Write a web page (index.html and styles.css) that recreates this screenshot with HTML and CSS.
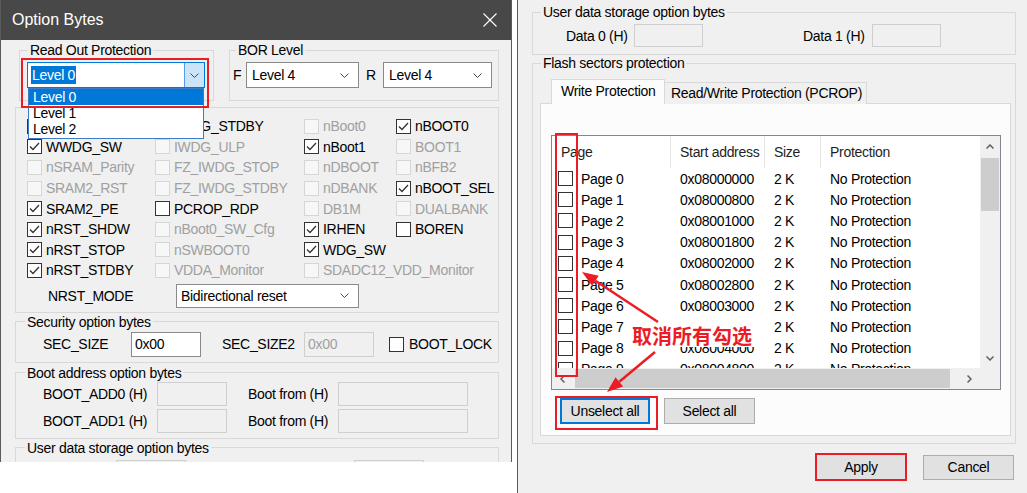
FILE: index.html
```html
<!DOCTYPE html>
<html>
<head>
<meta charset="utf-8">
<title>Option Bytes</title>
<link rel="stylesheet" href="styles.css">
</head>
<body>
<div class="dlg">
  <div class="titlebar">
    <span class="title">Option Bytes</span>
    <svg class="close" viewBox="0 0 14 14"><line x1="0.5" y1="0.5" x2="13.5" y2="13.5"/><line x1="13.5" y1="0.5" x2="0.5" y2="13.5"/></svg>
  </div>
  <div class="lbody">
    <div class="rowA">
      <fieldset class="grp rop">
        <legend>Read Out Protection</legend>
        <div class="combo focus">
          <span class="selv">Level 0</span>
          <span class="dbtn"><svg class="chev" viewBox="0 0 9 5"><polyline points="0.5,0.5 4.5,4.5 8.5,0.5"/></svg></span>
        </div>
      </fieldset>
      <fieldset class="grp bor">
        <legend>BOR Level</legend>
        <div class="borrow">
          <span class="fl">F</span>
          <div class="combo wF"><span>Level 4</span><svg class="chev" viewBox="0 0 9 5"><polyline points="0.5,0.5 4.5,4.5 8.5,0.5"/></svg></div>
          <span class="rl">R</span>
          <div class="combo wR"><span>Level 4</span><svg class="chev" viewBox="0 0 9 5"><polyline points="0.5,0.5 4.5,4.5 8.5,0.5"/></svg></div>
        </div>
      </fieldset>
    </div>

    <div class="grp cbgrp">
      <div class="cbgrid">
        <div class="cell"><span class="cb"><svg viewBox="0 0 13 13"><polyline points="2,6.5 5,9.5 11,3"/></svg></span><span>IWDG_SW</span></div>
        <div class="cell"><span class="cb"></span><span>IWDG_STDBY</span></div>
        <div class="cell dis"><span class="cb"></span><span>nBoot0</span></div>
        <div class="cell"><span class="cb"><svg viewBox="0 0 13 13"><polyline points="2,6.5 5,9.5 11,3"/></svg></span><span>nBOOT0</span></div>

        <div class="cell"><span class="cb"><svg viewBox="0 0 13 13"><polyline points="2,6.5 5,9.5 11,3"/></svg></span><span>WWDG_SW</span></div>
        <div class="cell dis"><span class="cb"></span><span>IWDG_ULP</span></div>
        <div class="cell"><span class="cb"><svg viewBox="0 0 13 13"><polyline points="2,6.5 5,9.5 11,3"/></svg></span><span>nBoot1</span></div>
        <div class="cell dis"><span class="cb"></span><span>BOOT1</span></div>

        <div class="cell dis"><span class="cb"></span><span>nSRAM_Parity</span></div>
        <div class="cell dis"><span class="cb"></span><span>FZ_IWDG_STOP</span></div>
        <div class="cell dis"><span class="cb"></span><span>nDBOOT</span></div>
        <div class="cell dis"><span class="cb"></span><span>nBFB2</span></div>

        <div class="cell dis"><span class="cb"></span><span>SRAM2_RST</span></div>
        <div class="cell dis"><span class="cb"></span><span>FZ_IWDG_STDBY</span></div>
        <div class="cell dis"><span class="cb"></span><span>nDBANK</span></div>
        <div class="cell"><span class="cb"><svg viewBox="0 0 13 13"><polyline points="2,6.5 5,9.5 11,3"/></svg></span><span>nBOOT_SEL</span></div>

        <div class="cell"><span class="cb"><svg viewBox="0 0 13 13"><polyline points="2,6.5 5,9.5 11,3"/></svg></span><span>SRAM2_PE</span></div>
        <div class="cell"><span class="cb"></span><span>PCROP_RDP</span></div>
        <div class="cell dis"><span class="cb"></span><span>DB1M</span></div>
        <div class="cell dis"><span class="cb"></span><span>DUALBANK</span></div>

        <div class="cell"><span class="cb"><svg viewBox="0 0 13 13"><polyline points="2,6.5 5,9.5 11,3"/></svg></span><span>nRST_SHDW</span></div>
        <div class="cell dis"><span class="cb"></span><span>nBoot0_SW_Cfg</span></div>
        <div class="cell"><span class="cb"><svg viewBox="0 0 13 13"><polyline points="2,6.5 5,9.5 11,3"/></svg></span><span>IRHEN</span></div>
        <div class="cell"><span class="cb"></span><span>BOREN</span></div>

        <div class="cell"><span class="cb"><svg viewBox="0 0 13 13"><polyline points="2,6.5 5,9.5 11,3"/></svg></span><span>nRST_STOP</span></div>
        <div class="cell dis"><span class="cb"></span><span>nSWBOOT0</span></div>
        <div class="cell"><span class="cb"><svg viewBox="0 0 13 13"><polyline points="2,6.5 5,9.5 11,3"/></svg></span><span>WDG_SW</span></div>
        <div class="cell empty"></div>

        <div class="cell"><span class="cb"><svg viewBox="0 0 13 13"><polyline points="2,6.5 5,9.5 11,3"/></svg></span><span>nRST_STDBY</span></div>
        <div class="cell dis"><span class="cb"></span><span>VDDA_Monitor</span></div>
        <div class="cell dis"><span class="cb"></span><span>SDADC12_VDD_Monitor</span></div>
        <div class="cell empty"></div>
      </div>
      <div class="nrst">
        <span class="nlab">NRST_MODE</span>
        <div class="combo wN"><span>Bidirectional reset</span><svg class="chev" viewBox="0 0 9 5"><polyline points="0.5,0.5 4.5,4.5 8.5,0.5"/></svg></div>
      </div>
    </div>

    <fieldset class="grp sec">
      <legend>Security option bytes</legend>
      <div class="frow">
        <span class="lab w88">SEC_SIZE</span>
        <div class="inp">0x00</div>
        <span class="lab w82 ml21">SEC_SIZE2</span>
        <div class="inp dis">0x00</div>
        <span class="cb ml15"></span>
        <span class="lab ml5">BOOT_LOCK</span>
      </div>
    </fieldset>

    <fieldset class="grp boot">
      <legend>Boot address option bytes</legend>
      <div class="frow r24">
        <span class="lab w114">BOOT_ADD0 (H)</span>
        <div class="inp dis w70"></div>
        <span class="lab w90 ml21">Boot from (H)</span>
        <div class="inp dis w130"></div>
      </div>
      <div class="frow r24 mt3">
        <span class="lab w114">BOOT_ADD1 (H)</span>
        <div class="inp dis w70"></div>
        <span class="lab w90 ml21">Boot from (H)</span>
        <div class="inp dis w130"></div>
      </div>
    </fieldset>

    <fieldset class="grp udata">
      <legend>User data storage option bytes</legend>
      <div class="frow r24 ud-row">
        <div class="inp dis w70"></div>
        <div class="inp dis w70 ml168"></div>
      </div>
    </fieldset>

    <div class="ddlist">
      <div class="ddi hl">Level 0</div>
      <div class="ddi">Level 1</div>
      <div class="ddi">Level 2</div>
    </div>
    <div class="redbox rop-red"></div>
  </div>
</div>

<div class="rpanel">
  <fieldset class="grp ud">
    <legend>User data storage option bytes</legend>
    <div class="frow r23 udr">
      <span class="lab w68">Data 0 (H)</span>
      <div class="inp dis w69"></div>
      <span class="lab w69 ml100">Data 1 (H)</span>
      <div class="inp dis w69"></div>
    </div>
  </fieldset>

  <fieldset class="grp fsp">
    <legend>Flash sectors protection</legend>
    <div class="tabs">
      <div class="tab sel">Write Protection</div>
      <div class="tab">Read/Write Protection (PCROP)</div>
    </div>
    <div class="tabpanel">
      <div class="lv">
        <div class="lvmain">
          <div class="lvhead">
            <div class="hc">Page</div>
            <div class="hc">Start address</div>
            <div class="hc">Size</div>
            <div class="hc">Protection</div>
          </div>
          <div class="lvrow"><div class="pc"><span class="lcb"></span>Page 0</div><div>0x08000000</div><div>2 K</div><div>No Protection</div></div>
          <div class="lvrow"><div class="pc"><span class="lcb"></span>Page 1</div><div>0x08000800</div><div>2 K</div><div>No Protection</div></div>
          <div class="lvrow"><div class="pc"><span class="lcb"></span>Page 2</div><div>0x08001000</div><div>2 K</div><div>No Protection</div></div>
          <div class="lvrow"><div class="pc"><span class="lcb"></span>Page 3</div><div>0x08001800</div><div>2 K</div><div>No Protection</div></div>
          <div class="lvrow"><div class="pc"><span class="lcb"></span>Page 4</div><div>0x08002000</div><div>2 K</div><div>No Protection</div></div>
          <div class="lvrow"><div class="pc"><span class="lcb"></span>Page 5</div><div>0x08002800</div><div>2 K</div><div>No Protection</div></div>
          <div class="lvrow"><div class="pc"><span class="lcb"></span>Page 6</div><div>0x08003000</div><div>2 K</div><div>No Protection</div></div>
          <div class="lvrow"><div class="pc"><span class="lcb"></span>Page 7</div><div>0x08003800</div><div>2 K</div><div>No Protection</div></div>
          <div class="lvrow"><div class="pc"><span class="lcb"></span>Page 8</div><div>0x08004000</div><div>2 K</div><div>No Protection</div></div>
          <div class="lvrow"><div class="pc"><span class="lcb"></span>Page 9</div><div>0x08004800</div><div>2 K</div><div>No Protection</div></div>
        </div>
        <div class="vscroll">
          <div class="sbtn"><svg class="sch" viewBox="0 0 8 5"><polyline points="0.5,4.5 4,1 7.5,4.5"/></svg></div>
          <div class="vthumb"></div>
          <div class="sfill"></div>
          <div class="sbtn"><svg class="sch" viewBox="0 0 8 5"><polyline points="0.5,0.5 4,4 7.5,0.5"/></svg></div>
        </div>
        <div class="hscroll">
          <div class="hbtn"><svg class="sch h" viewBox="0 0 5 8"><polyline points="4.5,0.5 1,4 4.5,7.5"/></svg></div>
          <div class="hthumb"></div>
          <div class="sfill"></div>
          <div class="hbtn"><svg class="sch h" viewBox="0 0 5 8"><polyline points="0.5,0.5 4,4 0.5,7.5"/></svg></div>
        </div>
        <div class="corner"></div>
      </div>
      <div class="btnrow">
        <div class="btn def">Unselect all</div>
        <div class="btn">Select all</div>
      </div>
    </div>
  </fieldset>

  <div class="actions">
    <div class="btn apply">Apply</div>
    <div class="btn cancel">Cancel</div>
  </div>

  <div class="redbox colred"></div>
  <div class="redbox unselred"></div>
  <span class="note">取消所有勾选</span>
  <svg class="arrows" viewBox="0 0 509 493">
    <line x1="140" y1="322" x2="77.4" y2="280.8"/>
    <polygon points="64,272 80.7,275.8 74.1,285.8"/>
    <line x1="137" y1="352" x2="101.3" y2="381.8"/>
    <polygon points="89,392 105.1,386.4 97.5,377.2"/>
  </svg>
</div>
</body>
</html>
```

FILE: styles.css
```css
* { box-sizing: border-box; }
html, body { margin: 0; padding: 0; }
body {
  width: 1027px;
  height: 493px;
  overflow: hidden;
  background: #ffffff;
  display: flex;
  align-items: flex-start;
  font-family: "Liberation Sans", Arial, sans-serif;
  font-size: 14px;
  letter-spacing: -0.3px;
  color: #000;
}

/* ---------- left dialog ---------- */
.dlg {
  width: 512px;
  height: 462px;
  flex: none;
  background: #f0f0f0;
  border-left: 1px solid #5a5a5a;
  border-right: 1px solid #5a5a5a;
  display: flex;
  flex-direction: column;
  overflow: hidden;
}
.titlebar {
  height: 40px;
  flex: none;
  background: #484848;
  color: #fff;
  display: flex;
  align-items: center;
  justify-content: space-between;
  padding: 0 14px 0 11px;
}
.title { font-size: 16px; letter-spacing: 0; }
.close { width: 14px; height: 14px; stroke: #fff; stroke-width: 1.1; }

.lbody { position: relative; flex: 1; padding-left: 14px; }

fieldset.grp {
  margin: 0;
  padding: 0;
  border: 1px solid #d9d9d9;
  min-width: 0;
}
fieldset.grp > legend {
  padding: 0 2px;
  margin-left: 9px;
  height: 16px;
  line-height: 16px;
  font-size: 14px;
}

.rowA { display: flex; gap: 15px; margin: 2px 0 0 4px; }
fieldset.grp.rop { width: 195px; padding: 4px 0 12px 0; }
fieldset.grp.rop > legend { margin-left: 8px; }
.rop .combo { margin-left: 7px; }
fieldset.grp.bor { width: 270px; padding: 4px 0 12px 0; }
fieldset.grp.bor > legend { margin-left: 6px; }
.borrow { display: flex; align-items: center; padding-left: 3px; }
.fl { width: 13px; }
.rl { width: 17px; margin-left: 7px; }

.combo {
  height: 26px;
  background: #fff;
  border: 1px solid #8a8a8a;
  display: flex;
  align-items: center;
  justify-content: space-between;
  padding: 0 9px 0 5px;
  white-space: nowrap;
}
.chev { width: 9px; height: 5px; fill: none; stroke: #4a4a4a; stroke-width: 1; }
.wF { width: 113px; }
.wR { width: 109px; }
.wN { width: 183px; height: 24px; padding-left: 4px; }
.combo.focus {
  width: 178px;
  border-color: #0078d7;
  padding: 0;
}
.selv {
  margin-left: 3px;
  padding: 0 1px;
  line-height: 18px;
  background: #0078d7;
  color: #fff;
}
.dbtn {
  width: 20px;
  height: 24px;
  background: #cce4f7;
  border-left: 1px solid #569de5;
  display: flex;
  align-items: center;
  justify-content: center;
}

.cbgrp {
  width: 484px;
  margin-top: 6px;
  border: 1px solid #d9d9d9;
  padding: 8px 0 4px 11px;
}
.cbgrid {
  display: grid;
  grid-template-columns: 128px 149px 92px 1fr;
  grid-auto-rows: 20.6px;
}
.cell {
  display: flex;
  align-items: center;
  gap: 4px;
  white-space: nowrap;
  min-width: 0;
}
.cb {
  width: 15px;
  height: 15px;
  flex: none;
  border: 1px solid #333;
  background: #fff;
  display: flex;
  align-items: center;
  justify-content: center;
}
.cb svg { width: 13px; height: 13px; fill: none; stroke: #333; stroke-width: 1.3; }
.cell.dis .cb { border-color: #d6d6d6; background: #f7f7f7; }
.cell.dis span { color: #a0a0a0; }

.nrst { display: flex; align-items: center; margin-top: 3px; padding-left: 21px; }
.nlab { width: 128px; }

fieldset.grp.sec { width: 484px; margin-top: 1px; padding: 2px 0 5px 0; }
fieldset.grp.boot { width: 484px; margin-top: 2px; padding: 1px 0 5px 0; }
fieldset.grp.udata { width: 484px; margin-top: 1px; padding: 4px 0 10px 0; }
.sec .frow, .boot .frow { padding-left: 27px; }
.ud-row { padding-left: 100px; }
.ml168 { margin-left: 168px; }

.frow { display: flex; align-items: center; height: 25px; white-space: nowrap; }
.frow.r24 { height: 24px; }
.frow.r23 { height: 23px; }
.mt3 { margin-top: 3px; }
.lab { flex: none; }
.w68 { width: 68px; } .w69 { width: 69px; } .w70 { width: 70px; }
.w82 { width: 82px; } .w88 { width: 88px; } .w90 { width: 90px; }
.w114 { width: 114px; } .w130 { width: 130px; }
.ml5 { margin-left: 5px; } .ml15 { margin-left: 15px; } .ml21 { margin-left: 21px; }
.ml100 { margin-left: 100px; }

.inp {
  width: 70px;
  height: 100%;
  flex: none;
  background: #fff;
  border: 1px solid #8a8a8a;
  padding-left: 3px;
  display: flex;
  align-items: center;
}
.inp.dis { background: #f0f0f0; border-color: #cfcfcf; color: #a0a0a0; }
.inp.w69 { width: 69px; }
.inp.w130 { width: 130px; }

.ddlist {
  position: absolute;
  left: 27px;
  top: 48px;
  width: 176px;
  height: 51px;
  background: #fff;
  border: 1px solid #3d7cc9;
}
.ddi { height: 16px; line-height: 16px; padding-left: 4px; }
.ddi.hl { background: #0078d7; color: #fff; }

.redbox { position: absolute; border: 2px solid #ec1c24; }
.rop-red { left: 20px; top: 18px; width: 188px; height: 50px; }

/* ---------- right panel ---------- */
.rpanel {
  position: relative;
  width: 510px;
  height: 493px;
  flex: none;
  margin-left: 5px;
  border-left: 1px solid #5a5a5a;
  background: #f0f0f0;
  padding: 4px 11px 0 14px;
}
fieldset.grp.ud { width: 484px; padding: 4px 0 7px 0; }
fieldset.grp.ud > legend { margin-left: 8px; }
.udr { padding-left: 33px; }
fieldset.grp.fsp { width: 484px; padding: 8px 0 7px 0; }
fieldset.grp.fsp > legend { margin-left: 8px; }

.tabs { display: flex; align-items: flex-end; height: 24px; padding-left: 18px; }
.tab {
  height: 22px;
  margin-bottom: -1px;
  margin-left: -1px;
  border: 1px solid #d9d9d9;
  border-bottom: 0;
  background: #f0f0f0;
  padding: 0 0 0 6px;
  width: 203px;
  line-height: 21px;
  white-space: nowrap;
}
.tab.sel {
  position: relative;
  z-index: 1;
  height: 25px;
  width: 114px;
  margin-left: 0;
  padding-left: 9px;
  background: #fcfcfc;
  line-height: 22px;
}
.tabpanel {
  width: 471px;
  margin-left: 7px;
  border: 1px solid #d9d9d9;
  background: #fcfcfc;
  padding: 31px 0 11px 10px;
}

.lv {
  width: 450px;
  height: 255px;
  border: 1px solid #828790;
  background: #fff;
  display: grid;
  grid-template-columns: 1fr 20px;
  grid-template-rows: 1fr 21px;
}
.lvmain { overflow: hidden; }
.lvhead, .lvrow {
  display: grid;
  grid-template-columns: 119px 94px 56px 1fr;
  white-space: nowrap;
}
.lvhead { height: 32px; color: #1e1e1e; }
.hc {
  display: flex;
  align-items: center;
  padding-left: 9px;
  border-right: 1px solid #e5e5e5;
}
.hc:last-child { border-right: 0; }
.lvrow { height: 21.2px; align-items: center; }
.lvrow > div { padding-left: 9px; }
.lvrow > .pc { display: flex; align-items: center; gap: 8px; padding-left: 6px; }
.lcb { width: 15px; height: 15px; border: 1px solid #333; background: #fff; flex: none; }

.vscroll { background: #f0f0f0; display: flex; flex-direction: column; }
.sbtn { height: 20px; flex: none; display: flex; align-items: center; justify-content: center; }
.sch { width: 8px; height: 5px; fill: none; stroke: #606060; stroke-width: 1.5; }
.sch.h { width: 5px; height: 8px; }
.vthumb { height: 53px; margin: 2px 1px 0; background: #cdcdcd; flex: none; }
.sfill { flex: 1; }
.hscroll { background: #f0f0f0; display: flex; }
.hbtn { width: 21px; flex: none; display: flex; align-items: center; justify-content: center; }
.hthumb { width: 375px; margin: 1px 0 1px 2px; background: #cdcdcd; flex: none; }
.corner { background: #f0f0f0; }

.btnrow { display: flex; gap: 14px; margin-top: 8px; padding-left: 9px; }
.btn {
  width: 91px;
  height: 26px;
  background: #e1e1e1;
  border: 1px solid #adadad;
  display: flex;
  align-items: center;
  justify-content: center;
  white-space: nowrap;
}
.btn.def { width: 90px; border: 2px solid #0078d7; }

.actions {
  display: flex;
  justify-content: flex-end;
  align-items: center;
  gap: 16px;
  margin-top: 9px;
  padding-right: 2px;
}
.apply { width: 92px; height: 28px; border: 2px solid #ec1c24; }
.cancel { width: 91px; height: 25px; }

.colred { left: 37px; top: 133px; width: 23px; height: 244px; }
.unselred { left: 37px; top: 396px; width: 103px; height: 34px; }
.note {
  position: absolute;
  left: 110px;
  top: 318px;
  padding: 8px 4px 1px 4px;
  background: #fff;
  font-family: "Noto Sans CJK SC", sans-serif;
  font-weight: 700;
  font-size: 20px;
  line-height: 20px;
  letter-spacing: 0;
  color: #ec1c24;
  white-space: nowrap;
}
.arrows {
  position: absolute;
  left: 0;
  top: 0;
  width: 509px;
  height: 493px;
  pointer-events: none;
  stroke: #ec1c24;
  fill: #ec1c24;
  stroke-width: 2.5;
}
.arrows polygon { stroke: none; }
```
